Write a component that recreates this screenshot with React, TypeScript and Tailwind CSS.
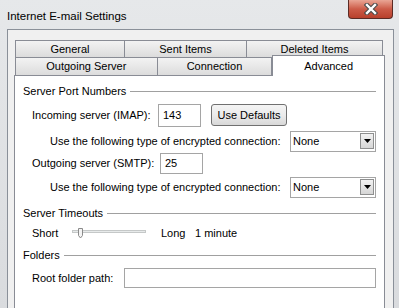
import React from "react";

const Tab = ({ label, w, active }: { label: string; w: string; active?: boolean }) => (
  <div
    className={
      active
        ? `${w} relative z-10 -mt-[2px] h-[21px] bg-white border border-b-0 border-[#898c95] flex items-start justify-center pt-[2px]`
        : `${w} h-full -ml-px first:ml-0 bg-gradient-to-b from-[#f3f3f3] to-[#dcdcdc] border border-b-0 border-[#898c95] flex items-center justify-center`
    }
  >
    {label}
  </div>
);

const GroupHeader = ({ title, cls }: { title: string; cls: string }) => (
  <div className={`${cls} h-[16px] flex items-center`}>
    <span>{title}</span>
    <div className="flex-1 h-px bg-[#a0a0a0] ml-[4px]" />
  </div>
);

const Select = () => (
  <div className="shrink-0 w-[86px] h-[21px] border border-[#a5a5a5] bg-white flex items-center justify-between pl-[2px] pr-[1px]">
    <span>None</span>
    <div className="w-[14px] h-[16px] border border-[#8e8f8f] bg-gradient-to-b from-[#f2f2f2] to-[#d6d6d6] flex items-center justify-center">
      <svg width="7" height="4" viewBox="0 0 7 4">
        <path d="M0 0h7L3.5 4z" fill="#000" />
      </svg>
    </div>
  </div>
);

const EncryptRow = ({ cls }: { cls: string }) => (
  <div className={`${cls} h-[22px] flex items-center justify-between pl-[27px]`}>
    <span>Use the following type of encrypted connection:</span>
    <Select />
  </div>
);

const App = () => {
  return (
    <div
      className="w-[399px] h-[308px] overflow-hidden flex flex-col bg-gradient-to-b from-[#e6e8ea] to-[#d9dbde] text-[11px] text-black whitespace-nowrap"
      style={{ fontFamily: '"Liberation Sans", Arial, sans-serif' }}
    >
      {/* title bar */}
      <div className="h-[29px] flex items-start justify-between pl-[7px] pr-[6px] shrink-0">
        <span className="pt-[8px] text-[11.5px]">Internet E-mail Settings</span>
        <div className="w-[45px] h-[19px] rounded-b-[4px] border border-t-0 border-[#5b2b25] bg-gradient-to-b from-[#e9a595] via-[#cc5b48] to-[#b8402c] flex items-center justify-center">
          <svg width="14" height="12" viewBox="0 0 14 12">
            <path d="M3 2l8 8M11 2l-8 8" stroke="#4a4a4a" strokeWidth="4.5" strokeLinecap="square" />
            <path d="M3 2l8 8M11 2l-8 8" stroke="#fff" strokeWidth="2.4" strokeLinecap="square" />
          </svg>
        </div>
      </div>

      {/* client area */}
      <div className="flex-1 ml-[7px] mr-[5px] border-l border-t border-r border-[#8a9099] bg-[#f0f0f0] pl-[6px] pt-[10px]">
        <div className="w-[371px]">
          <div className="flex h-[17px] pl-[1px]">
            <Tab label="General" w="w-[110px]" />
            <Tab label="Sent Items" w="w-[123px]" />
            <Tab label="Deleted Items" w="w-[137px]" />
          </div>
          <div className="flex h-[18px] pl-[1px]">
            <Tab label="Outgoing Server" w="w-[143px]" />
            <Tab label="Connection" w="w-[116px]" />
            <Tab label="Advanced" w="w-[113px]" active />
          </div>

          {/* page */}
          <div className="h-[240px] bg-white border border-[#898c95] pl-[8px] pr-[8px]">
            <GroupHeader title="Server Port Numbers" cls="mt-[7px]" />

            <div className="mt-[4px] h-[24px] flex items-center pl-[9px]">
              <span className="shrink-0 w-[126px]">Incoming server (IMAP):</span>
              <div className="shrink-0 w-[43px] h-[23px] border border-[#a5a5a5] flex items-center pl-[4px]">143</div>
              <button className="shrink-0 ml-[10px] w-[76px] h-[22px] rounded-[3px] border border-[#707070] bg-gradient-to-b from-[#f4f4f4] via-[#ebebeb] to-[#d8d8d8] flex items-center justify-center">
                Use Defaults
              </button>
            </div>

            <EncryptRow cls="mt-[3px]" />

            <div className="h-[23px] flex items-center pl-[9px]">
              <span className="shrink-0 w-[128px]">Outgoing server (SMTP):</span>
              <div className="shrink-0 w-[43px] h-[21px] border border-[#a5a5a5] flex items-center pl-[4px]">25</div>
            </div>

            <EncryptRow cls="mt-[1px]" />

            <GroupHeader title="Server Timeouts" cls="mt-[7px]" />

            <div className="mt-[3px] h-[18px] flex items-center pl-[9px]">
              <span className="shrink-0 w-[40px]">Short</span>
              <svg width="74" height="14" viewBox="0 0 74 14" className="shrink-0">
                <rect x="0.5" y="4.5" width="73" height="2" fill="#e7eaea" stroke="#c5c8c8" />
                <path d="M6.5 2.5h4v7l-2 2.5l-2-2.5z" fill="#f4f4f4" stroke="#8a8a8a" />
              </svg>
              <span className="shrink-0 ml-[15px] w-[34px]">Long</span>
              <span>1 minute</span>
            </div>

            <GroupHeader title="Folders" cls="mt-[5px]" />

            <div className="mt-[4px] h-[22px] flex items-center pl-[9px]">
              <span className="shrink-0 w-[92px]">Root folder path:</span>
              <div className="flex-1 h-[20px] border border-[#a5a5a5]" />
            </div>
          </div>
        </div>
      </div>
    </div>
  );
};

export default App;
